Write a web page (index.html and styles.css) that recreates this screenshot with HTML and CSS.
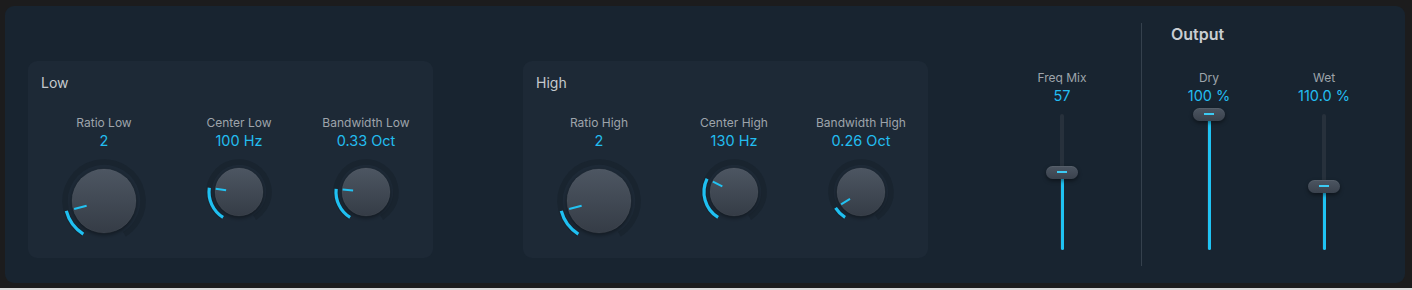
FILE: index.html
```html
<!DOCTYPE html>
<html lang="en">
<head>
<meta charset="utf-8">
<title>Spectral Gate</title>
<link rel="stylesheet" href="styles.css">
</head>
<body>
<svg class="defs" width="0" height="0" aria-hidden="true">
  <defs>
    <linearGradient id="knobGrad" x1="0" y1="0" x2="0" y2="1">
      <stop offset="0" stop-color="#4d5662"/>
      <stop offset="1" stop-color="#353c46"/>
    </linearGradient>
    <filter id="knobShadow" x="-30%" y="-30%" width="160%" height="160%">
      <feGaussianBlur stdDeviation="2.2"/>
    </filter>
  </defs>
</svg>
<div class="panel">
  <section class="group">
    <h2 class="group-title">Low</h2>
    <div class="knobs">
      <div class="knob-col">
        <div class="label">Ratio Low</div>
        <div class="value">2</div>
        <svg class="knob big" viewBox="0 0 90 90" width="90" height="90">
          <circle class="track" cx="45" cy="45" r="39" stroke-dasharray="201.5 300" transform="rotate(122 45 45)"/>
          <circle class="shadow" cx="45" cy="47" r="32" filter="url(#knobShadow)"/>
          <circle class="body" cx="45" cy="45" r="32"/>
          <circle class="arc" cx="45" cy="45" r="39" stroke-dasharray="29.4 300" transform="rotate(122 45 45)"/>
          <line class="pointer" x1="27.6" y1="49.7" x2="15.1" y2="53.0"/>
        </svg>
      </div>
      <div class="knob-col mid">
        <div class="label">Center Low</div>
        <div class="value">100 Hz</div>
        <svg class="knob small" viewBox="0 0 72 72" width="72" height="72">
          <circle class="track" cx="36" cy="36" r="30" stroke-dasharray="155 300" transform="rotate(122 36 36)"/>
          <circle class="shadow" cx="36" cy="38" r="24" filter="url(#knobShadow)"/>
          <circle class="body" cx="36" cy="36" r="24"/>
          <circle class="arc" cx="36" cy="36" r="30" stroke-dasharray="34.6 300" transform="rotate(122 36 36)"/>
          <line class="pointer" x1="23.1" y1="34.2" x2="12.7" y2="32.7"/>
        </svg>
      </div>
      <div class="knob-col last">
        <div class="label">Bandwidth Low</div>
        <div class="value">0.33 Oct</div>
        <svg class="knob small" viewBox="0 0 72 72" width="72" height="72">
          <circle class="track" cx="36" cy="36" r="30" stroke-dasharray="155 300" transform="rotate(122 36 36)"/>
          <circle class="shadow" cx="36" cy="38" r="24" filter="url(#knobShadow)"/>
          <circle class="body" cx="36" cy="36" r="24"/>
          <circle class="arc" cx="36" cy="36" r="30" stroke-dasharray="33.5 300" transform="rotate(122 36 36)"/>
          <line class="pointer" x1="23.1" y1="34.6" x2="12.6" y2="33.5"/>
        </svg>
      </div>
    </div>
  </section>

  <section class="group high">
    <h2 class="group-title">High</h2>
    <div class="knobs">
      <div class="knob-col">
        <div class="label">Ratio High</div>
        <div class="value">2</div>
        <svg class="knob big" viewBox="0 0 90 90" width="90" height="90">
          <circle class="track" cx="45" cy="45" r="39" stroke-dasharray="201.5 300" transform="rotate(122 45 45)"/>
          <circle class="shadow" cx="45" cy="47" r="32" filter="url(#knobShadow)"/>
          <circle class="body" cx="45" cy="45" r="32"/>
          <circle class="arc" cx="45" cy="45" r="39" stroke-dasharray="29.4 300" transform="rotate(122 45 45)"/>
          <line class="pointer" x1="27.6" y1="49.7" x2="15.1" y2="53.0"/>
        </svg>
      </div>
      <div class="knob-col mid">
        <div class="label">Center High</div>
        <div class="value">130 Hz</div>
        <svg class="knob small" viewBox="0 0 72 72" width="72" height="72">
          <circle class="track" cx="36" cy="36" r="30" stroke-dasharray="155 300" transform="rotate(122 36 36)"/>
          <circle class="shadow" cx="36" cy="38" r="24" filter="url(#knobShadow)"/>
          <circle class="body" cx="36" cy="36" r="24"/>
          <circle class="arc" cx="36" cy="36" r="30" stroke-dasharray="44 300" transform="rotate(122 36 36)"/>
          <line class="pointer" x1="24.3" y1="30.3" x2="14.9" y2="25.7"/>
        </svg>
      </div>
      <div class="knob-col last">
        <div class="label">Bandwidth High</div>
        <div class="value">0.26 Oct</div>
        <svg class="knob small" viewBox="0 0 72 72" width="72" height="72">
          <circle class="track" cx="36" cy="36" r="30" stroke-dasharray="155 300" transform="rotate(122 36 36)"/>
          <circle class="shadow" cx="36" cy="38" r="24" filter="url(#knobShadow)"/>
          <circle class="body" cx="36" cy="36" r="24"/>
          <circle class="arc" cx="36" cy="36" r="30" stroke-dasharray="13.6 300" transform="rotate(122 36 36)"/>
          <line class="pointer" x1="25.0" y1="42.9" x2="16.1" y2="48.4"/>
        </svg>
      </div>
    </div>
  </section>

  <div class="fader-col mix">
    <div class="label">Freq Mix</div>
    <div class="value">57</div>
    <div class="fader">
      <div class="fader-track"></div>
      <div class="fader-fill" style="height:57%"></div>
      <div class="fader-thumb" style="bottom:57%"></div>
    </div>
  </div>

  <div class="divider"></div>

  <div class="output">
    <h2 class="output-title">Output</h2>
    <div class="output-faders">
      <div class="fader-col">
        <div class="label">Dry</div>
        <div class="value">100 %</div>
        <div class="fader">
          <div class="fader-track"></div>
          <div class="fader-fill" style="height:100%"></div>
          <div class="fader-thumb" style="bottom:100%"></div>
        </div>
      </div>
      <div class="fader-col wet">
        <div class="label">Wet</div>
        <div class="value">110.0 %</div>
        <div class="fader">
          <div class="fader-track"></div>
          <div class="fader-fill" style="height:47%"></div>
          <div class="fader-thumb" style="bottom:47%"></div>
        </div>
      </div>
    </div>
  </div>
</div>
<div class="page-edge"></div>
</body>
</html>
```

FILE: styles.css
```css
* { box-sizing: border-box; }

html, body {
  margin: 0;
  padding: 0;
  background: #1c1c1d;
  width: 1412px;
  height: 290px;
  overflow: hidden;
}

body {
  padding: 6px 0 0 5px;
  font-family: Inter, "Noto Sans", "Liberation Sans", sans-serif;
}

.defs { position: absolute; width: 0; height: 0; }

.panel {
  display: flex;
  align-items: flex-start;
  width: 1400px;
  height: 277px;
  background: #182430;
  border-radius: 9px;
  padding-left: 23px;
}

.group {
  width: 405px;
  height: 197px;
  margin-top: 55px;
  background: #1d2936;
  border-radius: 9px;
  padding: 13px 0 0 13px;
}

.group.high { margin-left: 90px; }

.group-title {
  margin: 0;
  font-size: 14px;
  line-height: 17px;
  font-weight: 400;
  color: #c5c9ce;
}

.knobs {
  display: flex;
  margin-top: 24px;
  margin-left: 13px;
}

.knob-col {
  width: 100px;
  display: flex;
  flex-direction: column;
  align-items: center;
}

.knob-col.mid { margin-left: 35px; }
.knob-col.last { margin-left: 27px; }

.label {
  font-size: 12px;
  line-height: 15px;
  color: #9ea4ab;
  white-space: nowrap;
}

.value {
  margin-top: 1.5px;
  font-size: 14.5px;
  line-height: 18px;
  color: #23bdf0;
  white-space: nowrap;
}

.knob { display: block; margin-top: 6px; overflow: visible; }

.knob .track { fill: none; stroke: #19242f; stroke-width: 5.5; }
.knob .shadow { fill: rgba(0, 0, 0, 0.42); }
.knob .body { fill: url(#knobGrad); stroke: rgba(255, 255, 255, 0.05); stroke-width: 1; }
.knob .arc { fill: none; stroke: #1fc0f2; stroke-width: 3.2; }
.knob .pointer { stroke: #22c2f2; stroke-width: 2; stroke-linecap: butt; }

.fader-col {
  width: 80px;
  display: flex;
  flex-direction: column;
  align-items: center;
}

.fader-col.mix {
  margin-top: 64px;
  margin-left: 94px;
}

.fader {
  position: relative;
  width: 32px;
  height: 136px;
  margin-top: 9.5px;
}

.fader-track {
  position: absolute;
  left: 14px;
  top: 0;
  bottom: 0;
  width: 4px;
  border-radius: 2px;
  background: #27313c;
}

.fader-fill {
  position: absolute;
  left: 14.5px;
  bottom: 0;
  width: 3px;
  border-radius: 1.5px;
  background: #1fc3f3;
}

.fader-thumb {
  position: absolute;
  left: 0;
  width: 32px;
  height: 13px;
  margin-bottom: -6.5px;
  border-radius: 6.5px;
  background: linear-gradient(#4c5561, #3a424d);
  box-shadow: 0 2px 4px rgba(0, 0, 0, 0.45), inset 0 1px 0 rgba(255, 255, 255, 0.06);
}

.fader-thumb::after {
  content: "";
  position: absolute;
  left: 11px;
  top: 5.5px;
  width: 10px;
  height: 1.5px;
  background: #3ccaf2;
}

.divider {
  width: 1px;
  height: 243px;
  margin-top: 17px;
  margin-left: 39px;
  background: #35414d;
}

.output {
  margin-top: 19px;
}

.output-title {
  margin: 0 0 0 29px;
  font-size: 16px;
  line-height: 18px;
  font-weight: 600;
  color: #c9cdd2;
}

.output-faders {
  display: flex;
  margin-top: 27px;
  margin-left: 27px;
}

.fader-col.wet { margin-left: 35px; }

.page-edge {
  height: 2px;
  margin-top: 5px;
  margin-left: -5px;
  width: 1412px;
  background: #dadada;
}
```
